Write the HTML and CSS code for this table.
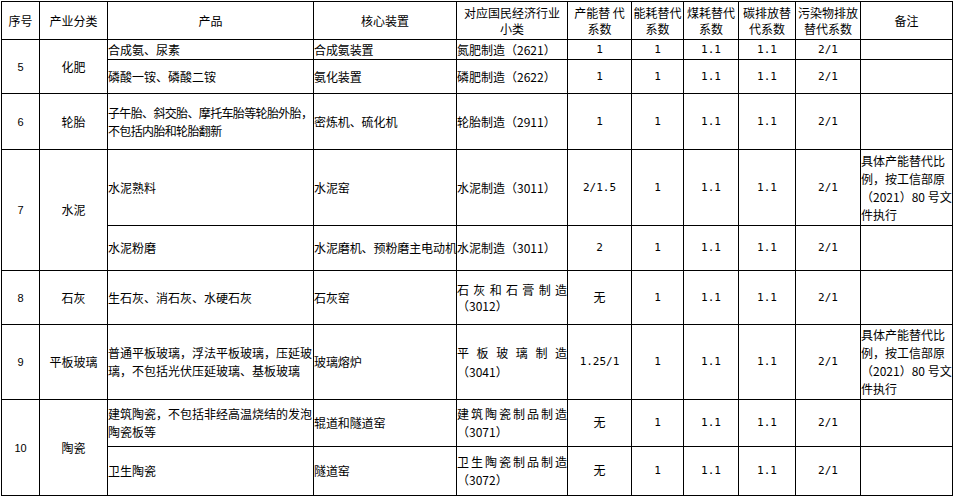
FILE: index.html
```html
<!DOCTYPE html>
<html lang="zh-CN">
<head>
<meta charset="utf-8">
<title>产能替代系数表</title>
<link rel="stylesheet" href="styles.css">
</head>
<body>
<table class="tbl">
  <colgroup>
    <col class="c-no"><col class="c-cat"><col class="c-prod"><col class="c-dev"><col class="c-ind">
    <col class="c-k1"><col class="c-k2"><col class="c-k3"><col class="c-k4"><col class="c-k5"><col class="c-rem">
  </colgroup>
  <tr class="r-head">
    <td class="hd">序号</td>
    <td class="hd">产业分类</td>
    <td class="hd">产品</td>
    <td class="hd">核心装置</td>
    <td class="hd">对应国民经济行业<br>小类</td>
    <td class="hd">产能替 代<br>系数</td>
    <td class="hd">能耗替代<br>系数</td>
    <td class="hd">煤耗替代<br>系数</td>
    <td class="hd">碳排放替<br>代系数</td>
    <td class="hd">污染物排放<br>替代系数</td>
    <td class="hd">备注</td>
  </tr>
  <tr class="r-20">
    <td class="no" rowspan="2">5</td>
    <td class="cat" rowspan="2">化肥</td>
    <td class="txt">合成氨、尿素</td>
    <td class="txt dev">合成氨装置</td>
    <td class="ind">氮肥制造（2621）</td>
    <td class="num">1</td><td class="num">1</td><td class="num">1.1</td><td class="num">1.1</td><td class="num">2/1</td>
    <td class="rem"></td>
  </tr>
  <tr class="r-34">
    <td class="txt">磷酸一铵、磷酸二铵</td>
    <td class="txt dev">氨化装置</td>
    <td class="ind">磷肥制造（2622）</td>
    <td class="num">1</td><td class="num">1</td><td class="num">1.1</td><td class="num">1.1</td><td class="num">2/1</td>
    <td class="rem"></td>
  </tr>
  <tr class="r-56">
    <td class="no">6</td>
    <td class="cat">轮胎</td>
    <td class="txt tight">子午胎、斜交胎、摩托车胎等轮胎外胎，<br>不包括内胎和轮胎翻新</td>
    <td class="txt dev">密炼机、硫化机</td>
    <td class="ind">轮胎制造（2911）</td>
    <td class="num">1</td><td class="num">1</td><td class="num">1.1</td><td class="num">1.1</td><td class="num">2/1</td>
    <td class="rem"></td>
  </tr>
  <tr class="r-76">
    <td class="no" rowspan="2">7</td>
    <td class="cat" rowspan="2">水泥</td>
    <td class="txt">水泥熟料</td>
    <td class="txt dev">水泥窑</td>
    <td class="ind">水泥制造（3011）</td>
    <td class="num">2/1.5</td><td class="num">1</td><td class="num">1.1</td><td class="num">1.1</td><td class="num">2/1</td>
    <td class="rem">具体产能替代比<br>例，按工信部原<br>（2021）80 号文<br>件执行</td>
  </tr>
  <tr class="r-45">
    <td class="txt">水泥粉磨</td>
    <td class="txt dev">水泥磨机、预粉磨主电动机</td>
    <td class="ind">水泥制造（3011）</td>
    <td class="num">2</td><td class="num">1</td><td class="num">1.1</td><td class="num">1.1</td><td class="num">2/1</td>
    <td class="rem"></td>
  </tr>
  <tr class="r-54">
    <td class="no">8</td>
    <td class="cat">石灰</td>
    <td class="txt">生石灰、消石灰、水硬石灰</td>
    <td class="txt dev">石灰窑</td>
    <td class="ind ind-16">石灰和石膏制造（3012）</td>
    <td class="num"><span class="cjk">无</span></td><td class="num">1</td><td class="num">1.1</td><td class="num">1.1</td><td class="num">2/1</td>
    <td class="rem"></td>
  </tr>
  <tr class="r-75">
    <td class="no">9</td>
    <td class="cat">平板玻璃</td>
    <td class="txt">普通平板玻璃，浮法平板玻璃，压延玻璃，不包括光伏压延玻璃、基板玻璃</td>
    <td class="txt dev">玻璃熔炉</td>
    <td class="ind ind-20">平板玻璃制造（3041）</td>
    <td class="num">1.25/1</td><td class="num">1</td><td class="num">1.1</td><td class="num">1.1</td><td class="num">2/1</td>
    <td class="rem">具体产能替代比<br>例，按工信部原<br>（2021）80 号文<br>件执行</td>
  </tr>
  <tr class="r-47">
    <td class="no" rowspan="2">10</td>
    <td class="cat" rowspan="2">陶瓷</td>
    <td class="txt">建筑陶瓷，不包括非经高温烧结的发泡陶瓷板等</td>
    <td class="txt dev">辊道和隧道窑</td>
    <td class="ind">建筑陶瓷制品制造（3071）</td>
    <td class="num"><span class="cjk">无</span></td><td class="num">1</td><td class="num">1.1</td><td class="num">1.1</td><td class="num">2/1</td>
    <td class="rem"></td>
  </tr>
  <tr class="r-49">
    <td class="txt">卫生陶瓷</td>
    <td class="txt dev">隧道窑</td>
    <td class="ind">卫生陶瓷制品制造（3072）</td>
    <td class="num"><span class="cjk">无</span></td><td class="num">1</td><td class="num">1.1</td><td class="num">1.1</td><td class="num">2/1</td>
    <td class="rem"></td>
  </tr>
</table>
</body>
</html>
```

FILE: styles.css
```css
html, body {
  margin: 0;
  padding: 0;
  background: #ffffff;
}

body {
  padding: 1px 0 0 1px;
}

.tbl {
  border-collapse: collapse;
  table-layout: fixed;
  width: 952px;
  font-family: "Noto Sans CJK SC", sans-serif;
  font-size: 12px;
  line-height: 18px;
  color: #000000;
  text-spacing-trim: space-all;
}

.tbl td {
  border: 1px solid #000000;
  padding: 0;
  vertical-align: middle;
  overflow: visible;
}

.c-no   { width: 38px; }
.c-cat  { width: 68px; }
.c-prod { width: 206px; }
.c-dev  { width: 143px; }
.c-ind  { width: 111px; }
.c-k1   { width: 64px; }
.c-k2   { width: 52px; }
.c-k3   { width: 55px; }
.c-k4   { width: 57px; }
.c-k5   { width: 65px; }
.c-rem  { width: 92px; }

.r-head { height: 38px; }
.r-20 { height: 20px; line-height: 16px; }
.r-34 { height: 34px; }
.r-56 { height: 56px; }
.r-76 { height: 76px; }
.r-45 { height: 45px; }
.r-54 { height: 54px; }
.r-75 { height: 75px; }
.r-47 { height: 47px; }
.r-49 { height: 49px; }

.hd {
  text-align: center;
  line-height: 16px;
  white-space: nowrap;
}

.no {
  text-align: center;
  font-family: "Liberation Sans", "Noto Sans CJK SC", sans-serif;
  font-size: 11px;
}

.cat {
  text-align: center;
}

.txt {
  text-align: left;
  padding-left: 0;
}

.tbl td.tight {
  white-space: nowrap;
  letter-spacing: -0.65px;
}

.tbl td.dev {
  white-space: nowrap;
  letter-spacing: -0.1px;
}

.ind {
  text-align: justify;
  padding: 0 1px 0 0;
}

.ind-16 { line-height: 16px; }
.ind-20 { line-height: 19px; }

.num {
  text-align: center;
  font-family: "DejaVu Sans Mono", "Noto Sans CJK SC", monospace;
  font-size: 11px;
}

.cjk {
  font-family: "Noto Sans CJK SC", sans-serif;
  font-size: 12px;
}

.rem {
  text-align: left;
  white-space: nowrap;
  line-height: 18px;
}
```
